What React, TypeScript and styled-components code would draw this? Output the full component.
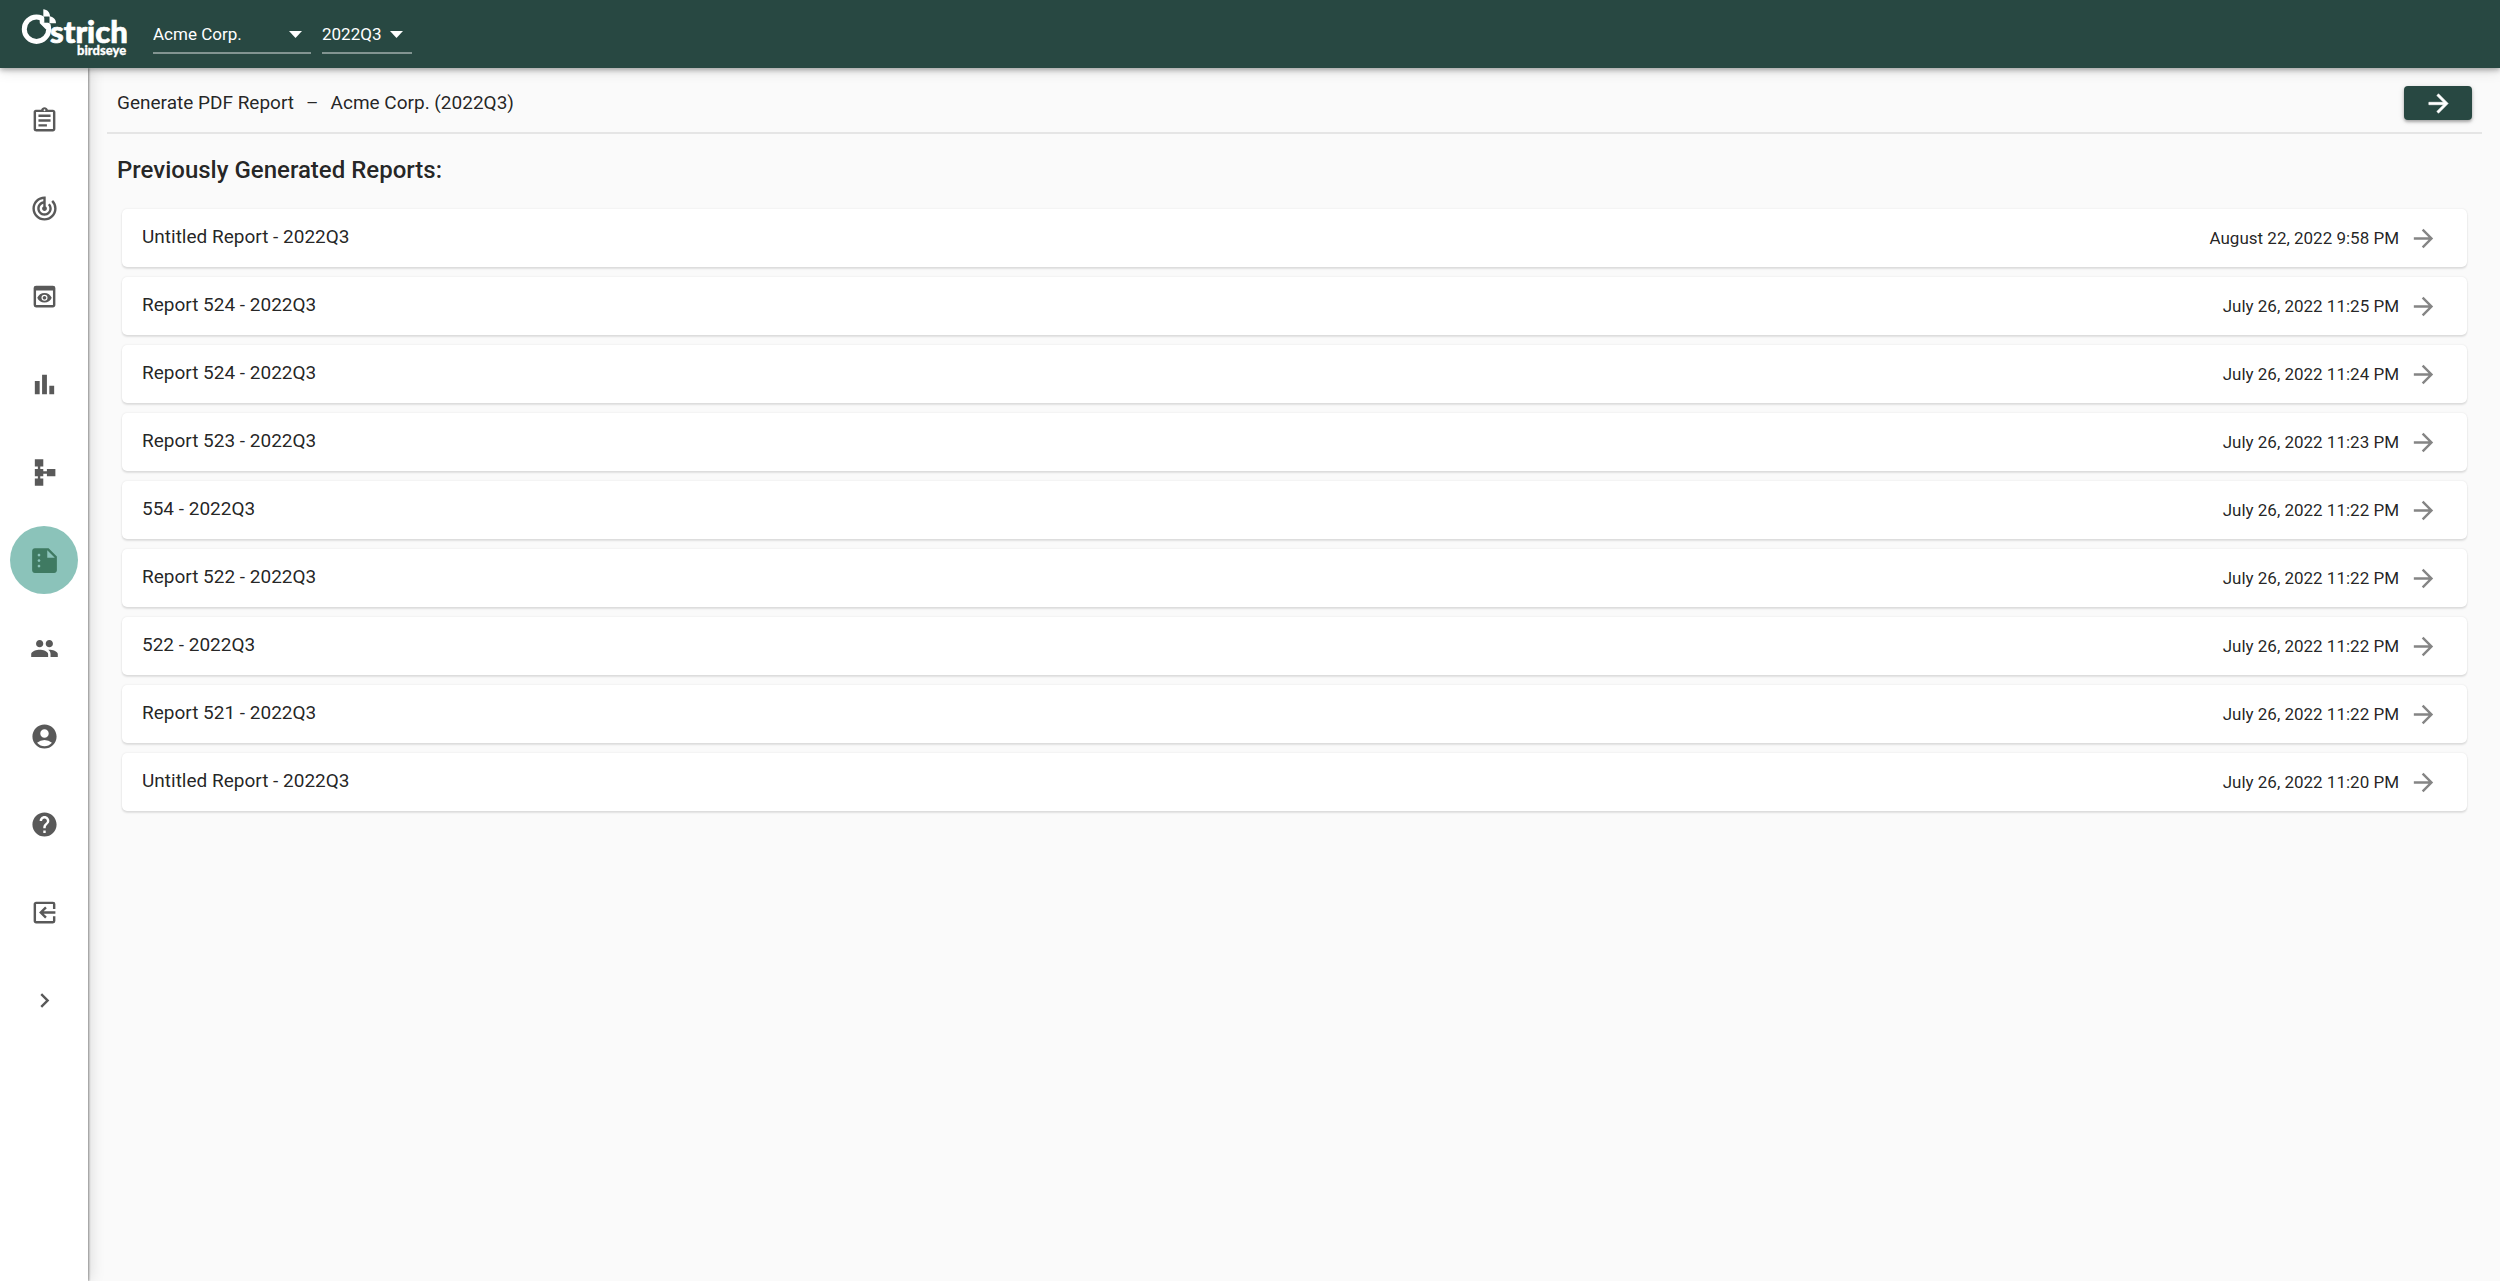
import React from "react";
import styled, { createGlobalStyle, css } from "styled-components";
import {
  MdAccountCircle,
  MdArrowForward,
  MdBarChart,
  MdChevronRight,
  MdExitToApp,
  MdHelp,
  MdOutlineAssignment,
  MdPeople,
  MdPreview,
  MdSchema,
  MdSummarize,
  MdTrackChanges,
} from "react-icons/md";

const colors = {
  brand: "#284842",
  page: "#fafafa",
  text: "rgba(0, 0, 0, 0.87)",
  icon: "#595959",
  arrow: "#858585",
  active: "#8bc3ba",
  activeIcon: "#3f7a62",
};

const GlobalStyle = createGlobalStyle`
  *, *::before, *::after { box-sizing: border-box; }
  body {
    margin: 0;
    background: ${colors.page};
    color: ${colors.text};
    font-family: Roboto, "Liberation Sans", sans-serif;
    font-size: 19px;
    line-height: 28px;
  }
`;

const Shell = styled.div`
  display: flex;
  flex-direction: column;
  min-height: 100vh;
`;

const TopBar = styled.header`
  display: flex;
  align-items: center;
  height: 68px;
  padding: 0 20px;
  background: ${colors.brand};
  color: #fff;
  position: relative;
  z-index: 2;
  box-shadow: 0 2px 5px rgba(0, 0, 0, 0.3), 0 4px 12px rgba(0, 0, 0, 0.1);
`;

const HomeLink = styled.a`
  display: flex;
  margin-right: 24px;
`;

const Field = styled.label<{ $width: number; $gap?: number }>`
  display: flex;
  align-items: center;
  position: relative;
  width: ${(p) => p.$width}px;
  height: 40px;
  margin-left: ${(p) => p.$gap ?? 0}px;
  border-bottom: 2px solid rgba(255, 255, 255, 0.42);
`;

const Select = styled.select`
  appearance: none;
  width: 100%;
  height: 100%;
  padding: 2px 0 0;
  border: 0;
  background: transparent;
  color: #fff;
  font: inherit;
  font-size: 17px;

  option { color: #222; }
`;

const Caret = styled.svg`
  position: absolute;
  right: 9px;
  top: 17px;
  width: 13px;
  height: 7px;
  fill: #fff;
  pointer-events: none;
`;

const Body = styled.div`
  display: flex;
  flex: 1;
`;

const SideNav = styled.nav`
  display: flex;
  flex-direction: column;
  align-items: center;
  gap: 20px;
  width: 88px;
  flex-shrink: 0;
  padding: 18px 0;
  background: #fff;
  position: relative;
  z-index: 1;
  box-shadow: 1px 0 2px rgba(0, 0, 0, 0.4), 3px 0 14px rgba(0, 0, 0, 0.12);
`;

const navItem = css<{ $active?: boolean }>`
  display: flex;
  align-items: center;
  justify-content: center;
  width: 68px;
  height: 68px;
  padding: 0;
  border: 0;
  border-radius: 50%;
  background: ${(p) => (p.$active ? colors.active : "transparent")};
  color: ${(p) => (p.$active ? colors.activeIcon : colors.icon)};
  font-size: ${(p) => (p.$active ? 33 : 29)}px;
  cursor: pointer;
`;

const NavLink = styled.a<{ $active?: boolean }>`${navItem}`;
const NavButton = styled.button<{ $active?: boolean }>`${navItem}`;

const SignOutIcon = styled(MdExitToApp)`
  transform: scaleX(-1);
`;

const Main = styled.main`
  flex: 1;
  min-width: 0;
  padding: 0 18px;
`;

const TitleBar = styled.div`
  display: flex;
  align-items: center;
  justify-content: space-between;
  height: 66px;
  margin-left: 1px;
  padding: 6px 10px 0;
  border-bottom: 2px solid #e5e5e5;
`;

const Title = styled.h1`
  display: flex;
  gap: 12px;
  margin: 0;
  font-size: 19px;
  font-weight: 400;
`;

const GenerateButton = styled.button`
  display: flex;
  align-items: center;
  justify-content: center;
  width: 68px;
  height: 34px;
  padding: 0;
  border: 0;
  border-radius: 4px;
  background: ${colors.brand};
  color: #fff;
  font-size: 29px;
  cursor: pointer;
  box-shadow: 0 2px 3px rgba(0, 0, 0, 0.28), 0 1px 6px rgba(0, 0, 0, 0.12);
`;

const BoldArrow = styled(MdArrowForward)`
  path:not([fill="none"]) {
    stroke: currentColor;
    stroke-width: 0.5;
  }
`;

const Heading = styled.h2`
  margin: 21px 11px 24px;
  font-size: 24px;
  line-height: 30px;
  font-weight: 500;
`;

const ReportList = styled.ul`
  display: flex;
  flex-direction: column;
  gap: 10px;
  margin: 0;
  padding: 0 15px 0 16px;
  list-style: none;
`;

const ReportLink = styled.a`
  display: flex;
  align-items: center;
  height: 58px;
  padding: 0 29px 0 20px;
  border-radius: 5px;
  background: #fff;
  color: inherit;
  text-decoration: none;
  box-shadow: 0 2px 2px rgba(0, 0, 0, 0.1), 0 0 2px rgba(0, 0, 0, 0.1);
`;

const ReportName = styled.span`
  flex: 1;
  padding-bottom: 2px;
`;

const ReportDate = styled.time`
  margin-right: 10px;
  font-size: 17px;
`;

const RowArrow = styled(MdArrowForward)`
  color: ${colors.arrow};
  font-size: 29px;
`;

const LogoText = styled.text<{ $size: number; $stroke: number }>`
  font-family: Lato, "Liberation Sans", sans-serif;
  font-weight: 900;
  font-size: ${(p) => p.$size}px;
  stroke: #fff;
  stroke-width: ${(p) => p.$stroke};
`;

const Logo = () => (
  <svg width="109" height="52" viewBox="0 0 109 52" role="img" aria-label="Ostrich birdseye" fill="#fff">
    <circle cx="16.5" cy="21.2" r="12.2" fill="none" stroke="#fff" strokeWidth="5" />
    <path d="M21 5h9v3.700h6v7h-7z" fill={colors.brand} />
    <path d="M23.300 1.300c4 .3 6.700 3 6.700 7.400h-6.700z" />
    <path d="M29.300 8.200c4 .5 6.700 3 6.700 7.100h-6.700z" />
    <path d="M19.500 9.500l4.300-.8v6h5.500l1.500 6-5 .5-6-6z" />
    <path d="M24.300 8.700h5v6h-5z" fill={colors.brand} />
    <LogoText x="30" y="35" $size={31} $stroke={0.7}>strich</LogoText>
    <LogoText x="57" y="47" $size={13} $stroke={0.3}>birdseye</LogoText>
  </svg>
);

const DropDown = ({ label, options, width, gap }: { label: string; options: string[]; width: number; gap?: number }) => (
  <Field $width={width} $gap={gap}>
    <Select aria-label={label} defaultValue={options[0]}>
      {options.map((o) => (
        <option key={o}>{o}</option>
      ))}
    </Select>
    <Caret viewBox="0 0 14 7" preserveAspectRatio="none" aria-hidden="true">
      <path d="M0 0h14l-7 7z" />
    </Caret>
  </Field>
);

const navLinks = [
  { label: "Assessments", Icon: MdOutlineAssignment },
  { label: "Targets", Icon: MdTrackChanges },
  { label: "Preview", Icon: MdPreview },
  { label: "Charts", Icon: MdBarChart },
  { label: "Structure", Icon: MdSchema },
  { label: "Reports", Icon: MdSummarize, active: true },
  { label: "People", Icon: MdPeople },
  { label: "Account", Icon: MdAccountCircle },
  { label: "Help", Icon: MdHelp },
  { label: "Sign out", Icon: SignOutIcon },
];

const reports = [
  { name: "Untitled Report - 2022Q3", date: "August 22, 2022 9:58 PM" },
  { name: "Report 524 - 2022Q3", date: "July 26, 2022 11:25 PM" },
  { name: "Report 524 - 2022Q3", date: "July 26, 2022 11:24 PM" },
  { name: "Report 523 - 2022Q3", date: "July 26, 2022 11:23 PM" },
  { name: "554 - 2022Q3", date: "July 26, 2022 11:22 PM" },
  { name: "Report 522 - 2022Q3", date: "July 26, 2022 11:22 PM" },
  { name: "522 - 2022Q3", date: "July 26, 2022 11:22 PM" },
  { name: "Report 521 - 2022Q3", date: "July 26, 2022 11:22 PM" },
  { name: "Untitled Report - 2022Q3", date: "July 26, 2022 11:20 PM" },
];

export default function App() {
  return (
    <Shell>
      <GlobalStyle />
      <TopBar>
        <HomeLink href="#home">
          <Logo />
        </HomeLink>
        <DropDown label="Company" options={["Acme Corp."]} width={158} />
        <DropDown label="Quarter" options={["2022Q3"]} width={90} gap={11} />
      </TopBar>
      <Body>
        <SideNav aria-label="Main">
          {navLinks.map(({ label, Icon, active }) => (
            <NavLink key={label} href="#nav" aria-label={label} aria-current={active ? "page" : undefined} $active={active}>
              <Icon />
            </NavLink>
          ))}
          <NavButton type="button" aria-label="Expand menu">
            <MdChevronRight />
          </NavButton>
        </SideNav>
        <Main>
          <TitleBar>
            <Title>
              <span>Generate PDF Report</span>
              <span>–</span>
              <span>Acme Corp. (2022Q3)</span>
            </Title>
            <GenerateButton type="button" aria-label="Generate report">
              <BoldArrow />
            </GenerateButton>
          </TitleBar>
          <Heading>Previously Generated Reports:</Heading>
          <ReportList>
            {reports.map((r, i) => (
              <li key={i}>
                <ReportLink href="#report">
                  <ReportName>{r.name}</ReportName>
                  <ReportDate>{r.date}</ReportDate>
                  <RowArrow />
                </ReportLink>
              </li>
            ))}
          </ReportList>
        </Main>
      </Body>
    </Shell>
  );
}
